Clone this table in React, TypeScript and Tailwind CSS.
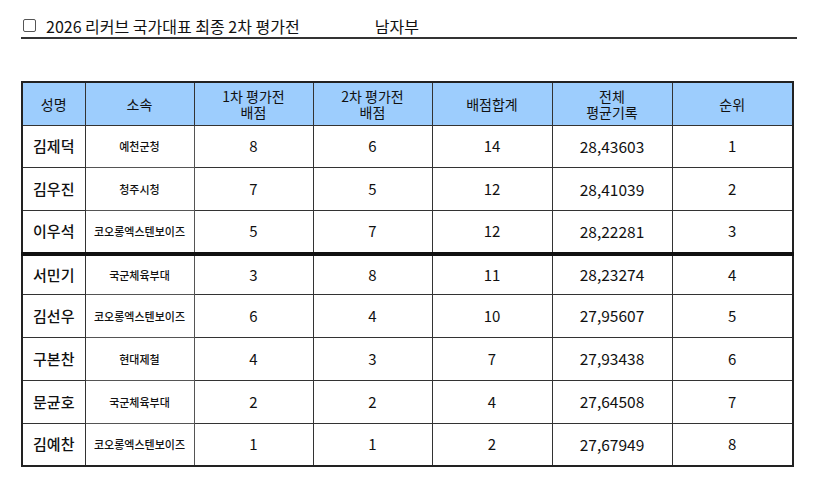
const ROWS = [
  { name: "김제덕", team: "예천군청", r1: 8, r2: 6, sum: 14, avg: "28,43603", rank: 1 },
  { name: "김우진", team: "청주시청", r1: 7, r2: 5, sum: 12, avg: "28,41039", rank: 2 },
  { name: "이우석", team: "코오롱엑스텐보이즈", r1: 5, r2: 7, sum: 12, avg: "28,22281", rank: 3 },
  { name: "서민기", team: "국군체육부대", r1: 3, r2: 8, sum: 11, avg: "28,23274", rank: 4 },
  { name: "김선우", team: "코오롱엑스텐보이즈", r1: 6, r2: 4, sum: 10, avg: "27,95607", rank: 5 },
  { name: "구본찬", team: "현대제철", r1: 4, r2: 3, sum: 7, avg: "27,93438", rank: 6 },
  { name: "문균호", team: "국군체육부대", r1: 2, r2: 2, sum: 4, avg: "27,64508", rank: 7 },
  { name: "김예찬", team: "코오롱엑스텐보이즈", r1: 1, r2: 1, sum: 2, avg: "27,67949", rank: 8 },
];

const FONT = { fontFamily: '"Noto Sans CJK KR", "Noto Sans", sans-serif' };

export default function App() {
  return (
    <div className="w-[818px] h-[486px] bg-white text-[#111]" style={FONT}>
      <div className="ml-[21px] w-[776px] pt-[15px]">
        <div className="flex items-center h-[24px] border-b-2 border-[#333] pb-[1px]">
          <span className="ml-[2px] w-[13px] h-[13px] rounded-[2px] border border-[#555]" />
          <span className="ml-[10px] text-[16px] leading-none">2026 리커브 국가대표 최종 2차 평가전</span>
          <span className="ml-[75px] text-[16px] leading-none">남자부</span>
        </div>
      </div>

      <table className="mt-[42px] ml-[21px] border-collapse border-2 border-[#222] text-center">
        <thead>
          <tr className="h-[43px] bg-[#9dcdfd] text-[14px] leading-[16px]">
            <th className="w-[63px] border border-[#333] font-normal">성명</th>
            <th className="w-[109px] border border-[#333] font-normal">소속</th>
            <th className="w-[119px] border border-[#333] font-normal">1차 평가전<br />배점</th>
            <th className="w-[119px] border border-[#333] font-normal">2차 평가전<br />배점</th>
            <th className="w-[120px] border border-[#333] font-normal">배점합계</th>
            <th className="w-[120px] border border-[#333] font-normal">전체<br />평균기록</th>
            <th className="w-[121px] border border-[#333] font-normal">순위</th>
          </tr>
        </thead>
        <tbody>
          {ROWS.map((r, i) => (
            <tr
              key={r.name}
              className={i === 3 ? "h-[41px] border-t-4 border-t-[#111]" : "h-[42.9px]"}
            >
              <td className="border border-[#333] text-[15px] font-medium">{r.name}</td>
              <td className="border border-[#555] text-[11px] font-medium">{r.team}</td>
              <td className="border border-[#333] text-[15px]">{r.r1}</td>
              <td className="border border-[#333] text-[15px]">{r.r2}</td>
              <td className="border border-[#333] text-[15px]">{r.sum}</td>
              <td className="border border-[#333] text-[15.5px]">{r.avg}</td>
              <td className="border border-[#333] text-[15px]">{r.rank}</td>
            </tr>
          ))}
        </tbody>
      </table>
    </div>
  );
}
